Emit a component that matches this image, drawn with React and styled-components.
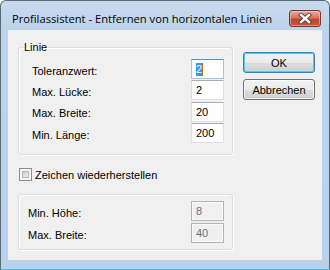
import styled, { createGlobalStyle } from "styled-components";

const GlobalStyle = createGlobalStyle`
  body {
    margin: 0;
    background: #fff;
  }
`;

function CloseIcon() {
  return (
    <svg width="14" height="11" viewBox="0 0 14 11">
      <path d="M3 2 L11 9 M11 2 L3 9" stroke="#4a3b3b" strokeWidth="4.2" strokeLinecap="square" />
      <path d="M3 2 L11 9 M11 2 L3 9" stroke="#fff" strokeWidth="2.4" strokeLinecap="square" />
    </svg>
  );
}

const fields = [
  { label: "Toleranzwert:", value: "2", focused: true },
  { label: "Max. Lücke:", value: "2" },
  { label: "Max. Breite:", value: "20" },
  { label: "Min. Länge:", value: "200" },
];

const restoreFields = [
  { label: "Min. Höhe:", value: "8" },
  { label: "Max. Breite:", value: "40" },
];

export default function App() {
  return (
    <>
      <GlobalStyle />
      <Window>
        <TitleBar>
          <Title>Profilassistent - Entfernen von horizontalen Linien</Title>
          <CloseButton>
            <CloseIcon />
          </CloseButton>
        </TitleBar>

        <Client>
          <LeftColumn>
            <Group $pad="5px 0 11px">
              <Legend>Linie</Legend>
              <Rows $gap="1.4px">
                {fields.map((f) => (
                  <Row key={f.label} $indent="13px">
                    <Label>{f.label}</Label>
                    <TextBox $focused={f.focused}>
                      {f.focused ? (
                        <>
                          <Selection>{f.value}</Selection>
                          <Caret />
                        </>
                      ) : (
                        f.value
                      )}
                    </TextBox>
                  </Row>
                ))}
              </Rows>
            </Group>

            <CheckRow>
              <CheckBox />
              <span>Zeichen wiederherstellen</span>
            </CheckRow>

            <Group $pad="6px 0 6px">
              <Rows $gap="2px">
                {restoreFields.map((f) => (
                  <Row key={f.label} $indent="9px">
                    <Label>{f.label}</Label>
                    <TextBox $disabled>{f.value}</TextBox>
                  </Row>
                ))}
              </Rows>
            </Group>
          </LeftColumn>

          <ButtonColumn>
            <Button $default>OK</Button>
            <Button>Abbrechen</Button>
          </ButtonColumn>
        </Client>
      </Window>
    </>
  );
}

const Window = styled.div`
  width: 330px;
  height: 270px;
  box-sizing: border-box;
  display: flex;
  flex-direction: column;
  border: 1px solid #5b6875;
  border-bottom-color: #39c3e3;
  border-radius: 6px 6px 0 0;
  background: linear-gradient(180deg, #c8daee 0px, #bcd3eb 30px, #b9d1ea 100%);
  overflow: hidden;
`;

const TitleBar = styled.div`
  height: 29px;
  box-sizing: border-box;
  display: flex;
  align-items: center;
  padding: 5px 8px 0 11px;
`;

const Title = styled.div`
  flex: 1;
  font: 11.2px "Open Sans", "Liberation Sans", sans-serif;
  color: #000;
  white-space: nowrap;
`;

const CloseButton = styled.div`
  width: 30px;
  height: 15px;
  display: flex;
  align-items: center;
  justify-content: center;
  border: 1px solid #7d3327;
  border-radius: 3px;
  background: linear-gradient(180deg, #e9a99b 0%, #d8735f 45%, #c5452c 55%, #c9553a 100%);
  box-shadow: inset 0 0 0 1px rgba(255, 220, 210, 0.45);
`;

const Client = styled.div`
  flex: 1;
  margin: 0 7px 9px;
  display: flex;
  gap: 10px;
  padding: 11px 0 0 10px;
  background: #f0f0f0;
  font: 11px "Liberation Sans", Arial, sans-serif;
  color: #000;
`;

const LeftColumn = styled.div`
  width: 215px;
  display: flex;
  flex-direction: column;
  gap: 13px;
`;

const Group = styled.fieldset`
  margin: 0;
  min-width: 0;
  padding: ${({ $pad }) => $pad};
  border: 1px solid #d5dfe5;
  border-radius: 3px;
  box-shadow: inset 1px 1px 0 #fff, 1px 1px 0 #fff;
`;

const Legend = styled.legend`
  margin-left: 4px;
  padding: 0 1px;
  line-height: 13px;
`;

const Rows = styled.div`
  display: flex;
  flex-direction: column;
  gap: ${({ $gap }) => $gap};
`;

const Row = styled.div`
  height: 20px;
  display: flex;
  align-items: center;
  justify-content: space-between;
  padding: 0 8px 0 ${({ $indent }) => $indent};
`;

const Label = styled.span`
  padding-top: 3px;
`;

const TextBox = styled.div`
  width: 33px;
  height: 20px;
  box-sizing: border-box;
  display: flex;
  align-items: center;
  padding-left: 4px;
  border: 1px solid ${({ $focused, $disabled }) =>
    $focused ? "#a4c6e4" : $disabled ? "#afb3b6" : "#dbdfe6"};
  border-top-color: ${({ $focused, $disabled }) =>
    $focused ? "#5a8fc4" : $disabled ? "#afb3b6" : "#abadb3"};
  background: ${({ $disabled }) => ($disabled ? "#f0f0f0" : "#fff")};
  box-shadow: ${({ $disabled }) => ($disabled ? "inset 0 0 0 1px #fafafa" : "none")};
  color: ${({ $disabled }) => ($disabled ? "#6d6d6d" : "#000")};
`;

const Selection = styled.span`
  background: #3399ff;
  color: #fff;
  line-height: 13px;
`;

const Caret = styled.span`
  width: 1px;
  height: 13px;
  background: #c8641e;
`;

const CheckRow = styled.label`
  height: 13px;
  display: flex;
  align-items: center;
  gap: 3px;
  padding-left: 1px;
`;

const CheckBox = styled.span`
  position: relative;
  width: 13px;
  height: 13px;
  box-sizing: border-box;
  border: 1px solid #8e8f8f;
  background: #f4f4f4;

  &::after {
    content: "";
    position: absolute;
    inset: 2px;
    border: 1px solid #b8b8b8;
    background: linear-gradient(135deg, #cbcbcb, #f2f2f2);
  }
`;

const ButtonColumn = styled.div`
  display: flex;
  flex-direction: column;
  gap: 6px;
  padding-top: 11px;
`;

const Button = styled.div`
  width: 72px;
  height: 21px;
  box-sizing: border-box;
  display: flex;
  align-items: center;
  justify-content: center;
  border: 1px solid ${({ $default }) => ($default ? "#3c7fb1" : "#707070")};
  border-radius: 3px;
  background: linear-gradient(180deg, #f2f2f2 0%, #ebebeb 50%, #dddddd 51%, #cfcfcf 100%);
  box-shadow: inset 0 0 0 1px
    ${({ $default }) => ($default ? "#48d0f7" : "rgba(255, 255, 255, 0.7)")};
`;
